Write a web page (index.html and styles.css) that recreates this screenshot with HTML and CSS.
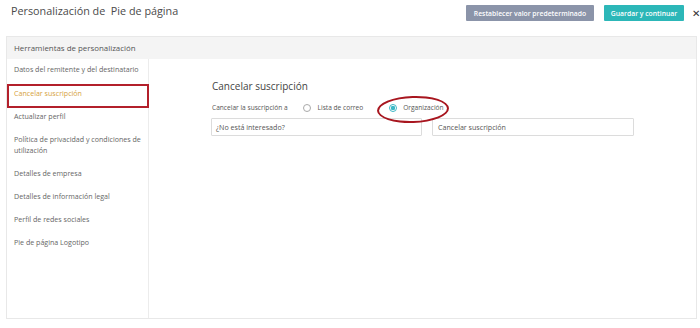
FILE: index.html
```html
<!DOCTYPE html>
<html lang="es">
<head>
<meta charset="utf-8">
<title>Personalización de Pie de página</title>
<link rel="stylesheet" href="styles.css">
</head>
<body>
<div class="topbar">
  <div class="title">Personalización de&nbsp; Pie de página</div>
  <div class="actions">
    <button class="btn btn-reset">Restablecer valor predeterminado</button>
    <button class="btn btn-save">Guardar y continuar</button>
    <span class="close">✕</span>
  </div>
</div>
<div class="panel">
  <div class="panel-head">Herramientas de personalización</div>
  <div class="panel-body">
    <ul class="sidebar">
      <li class="item">Datos del remitente y del destinatario</li>
      <li class="item active">Cancelar suscripción<span class="mark-box"></span></li>
      <li class="item">Actualizar perfil</li>
      <li class="item">Política de privacidad y condiciones de utilización</li>
      <li class="item">Detalles de empresa</li>
      <li class="item">Detalles de información legal</li>
      <li class="item">Perfil de redes sociales</li>
      <li class="item">Pie de página Logotipo</li>
    </ul>
    <div class="main">
      <h2 class="heading">Cancelar suscripción</h2>
      <div class="radio-row">
        <span class="radio-label">Cancelar la suscripción a</span>
        <span class="option"><span class="radio"></span>Lista de correo</span>
        <span class="option selected"><span class="radio"></span>Organización<span class="mark-ellipse"></span></span>
      </div>
      <div class="inputs">
        <div class="input input-wide">¿No está interesado?</div>
        <div class="input input-narrow">Cancelar suscripción</div>
      </div>
    </div>
  </div>
</div>
</body>
</html>
```
FILE: styles.css
```css
* { box-sizing: border-box; }
html, body { margin: 0; padding: 0; background: #fff; }
body {
  font-family: "Open Sans", "Noto Sans", sans-serif;
  width: 700px;
  height: 328px;
  overflow: hidden;
  color: #555;
}
.topbar {
  height: 36px;
  display: flex;
  justify-content: space-between;
  align-items: flex-start;
  padding: 5px 0 0 11px;
}
.title {
  font-size: 10.8px;
  line-height: 16px;
  color: #4a4a4a;
  margin-top: -2px;
}
.actions {
  display: flex;
  align-items: center;
  margin-right: 0;
}
.btn {
  border: 0;
  border-radius: 1px;
  height: 16px;
  padding: 0;
  font-family: "Open Sans", sans-serif;
  font-weight: 600;
  font-size: 6.8px;
  color: #fff;
  cursor: pointer;
}
.btn-reset { width: 128px; background: #8b94a9; }
.btn-save { width: 80px; margin-left: 10px; background: #2cb7b8; }
.close {
  margin-left: 8px;
  font-size: 10px;
  color: #333;
  line-height: 16px;
}
.panel {
  margin-left: 6px;
  width: 691px;
  height: 283px;
  border: 1px solid #e8e8e8;
  display: flex;
  flex-direction: column;
}
.panel-head {
  height: 22px;
  background: #f4f4f4;
  font-size: 7.9px;
  line-height: 22px;
  padding-left: 7px;
  color: #555;
}
.panel-body {
  flex: 1;
  display: flex;
}
.sidebar {
  list-style: none;
  margin: 0;
  padding: 0;
  width: 142px;
  border-right: 1px solid #ececec;
}
.item {
  position: relative;
  padding: 6px 7px;
  font-size: 7.1px;
  line-height: 11px;
  color: #666;
}
.item:first-child { padding-top: 5px; padding-bottom: 7px; }
.item.active { color: #d6a240; }
.mark-box {
  position: absolute;
  left: 0;
  right: -1px;
  top: 2px;
  bottom: -3px;
  border: 2px solid #b3202b;
}
.main {
  flex: 1;
  padding: 20px 0 0 63px;
}
.heading {
  margin: 0;
  font-weight: 400;
  font-size: 10px;
  line-height: 14px;
  color: #444;
}
.radio-row {
  margin-top: 8px;
  height: 13px;
  display: flex;
  align-items: center;
  font-size: 6.6px;
  color: #555;
}
.radio-label { margin-right: 15px; }
.option {
  position: relative;
  display: flex;
  align-items: center;
}
.option + .option { margin-left: 26px; }
.radio {
  width: 8px;
  height: 8px;
  border-radius: 50%;
  border: 1px solid #a9a9a9;
  margin-right: 7px;
  background: #fff;
}
.selected .radio {
  border-color: #3cb8c6;
  background: radial-gradient(circle, #3cb8c6 0 2px, #fff 2.4px);
  margin-right: 6px;
}
.mark-ellipse {
  position: absolute;
  left: -12px;
  top: -7px;
  width: 72px;
  height: 27px;
  border: 2px solid #a8161f;
  border-radius: 50%;
  transform: rotate(-2deg);
}
.inputs {
  margin-top: 4px;
  display: flex;
  gap: 10px;
  margin-left: -1px;
}
.input {
  height: 18px;
  border: 1px solid #dcdcdc;
  border-radius: 1px;
  font-size: 7.1px;
  line-height: 16px;
  padding-left: 4px;
  color: #555;
}
.input-wide { width: 211px; }
.input-narrow { width: 202px; padding-left: 5px; }
```
